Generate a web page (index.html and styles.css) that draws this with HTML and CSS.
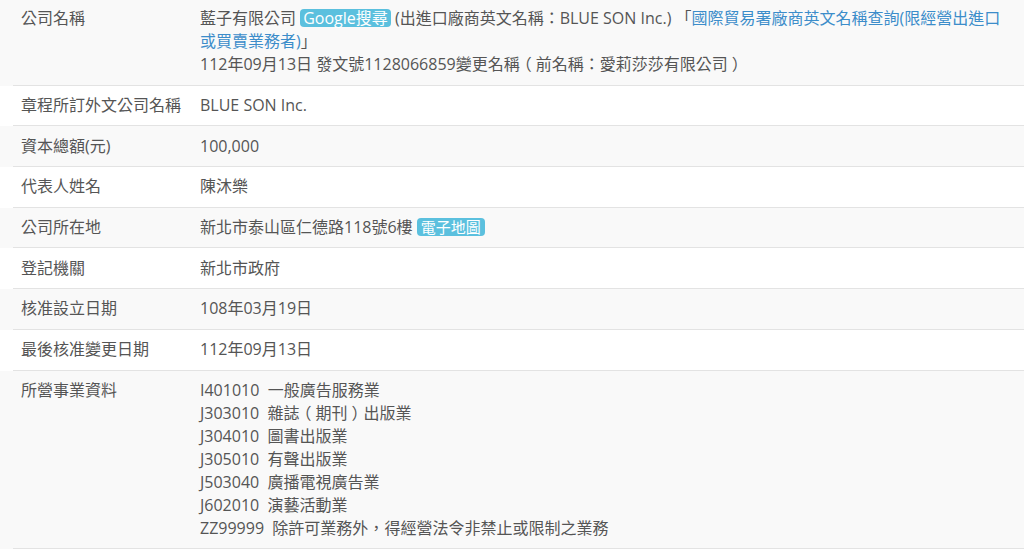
FILE: index.html
```html
<!DOCTYPE html>
<html lang="zh-TW">
<head>
<meta charset="utf-8">
<title>公司基本資料</title>
<link rel="stylesheet" href="styles.css">
</head>
<body>
<div class="info">
  <div class="row">
    <div class="cells">
      <div class="label">公司名稱</div>
      <div class="value">藍子有限公司 <span class="badge badge-g">Google搜尋</span> (出進口廠商英文名稱：BLUE SON Inc.) 「<a href="#">國際貿易署廠商英文名稱查詢(限經營出進口或買賣業務者)</a>」<br>112年09月13日 發文號1128066859變更名稱<span class="fw">（</span>前名稱：愛莉莎莎有限公司<span class="fw">）</span></div>
    </div>
  </div>
  <div class="row">
    <div class="cells">
      <div class="label">章程所訂外文公司名稱</div>
      <div class="value">BLUE SON Inc.</div>
    </div>
  </div>
  <div class="row">
    <div class="cells">
      <div class="label">資本總額(元)</div>
      <div class="value">100,000</div>
    </div>
  </div>
  <div class="row">
    <div class="cells">
      <div class="label">代表人姓名</div>
      <div class="value">陳沐樂</div>
    </div>
  </div>
  <div class="row">
    <div class="cells">
      <div class="label">公司所在地</div>
      <div class="value">新北市泰山區仁德路118號6樓 <span class="badge">電子地圖</span></div>
    </div>
  </div>
  <div class="row">
    <div class="cells">
      <div class="label">登記機關</div>
      <div class="value">新北市政府</div>
    </div>
  </div>
  <div class="row">
    <div class="cells">
      <div class="label">核准設立日期</div>
      <div class="value">108年03月19日</div>
    </div>
  </div>
  <div class="row">
    <div class="cells">
      <div class="label">最後核准變更日期</div>
      <div class="value">112年09月13日</div>
    </div>
  </div>
  <div class="row">
    <div class="cells">
      <div class="label">所營事業資料</div>
      <div class="value">I401010&nbsp; 一般廣告服務業<br>J303010&nbsp; 雜誌<span class="fw">（</span>期刊<span class="fw">）</span>出版業<br>J304010&nbsp; 圖書出版業<br>J305010&nbsp; 有聲出版業<br>J503040&nbsp; 廣播電視廣告業<br>J602010&nbsp; 演藝活動業<br>ZZ99999&nbsp; 除許可業務外<span class="fw">，</span>得經營法令非禁止或限制之業務</div>
    </div>
  </div>
</div>
</body>
</html>
```
FILE: styles.css
```css
html, body {
  margin: 0;
  padding: 0;
  background: #ffffff;
}
body {
  font-family: "Open Sans", "Noto Sans CJK TC", sans-serif;
  font-size: 16px;
  color: #555555;
}
.info {
  margin-top: -1px;
}
.row:nth-child(odd) {
  background: #f9f9f9;
}
.cells {
  margin-left: 13px;
  display: grid;
  grid-template-columns: 179px 1fr;
  border-bottom: 1px solid #e3e3e3;
}
.label,
.value {
  line-height: 23px;
  padding: 8.35px 8px;
}
.label {
  white-space: nowrap;
}
.value {
  padding-right: 14px;
}
.value a {
  color: #3c8dca;
  text-decoration: none;
}
.fw {
  display: inline-block;
  width: 1em;
  text-align: center;
  font-feature-settings: "halt" 1;
}
.badge {
  display: inline-block;
  background: #5bc0de;
  color: #ffffff;
  font-size: 15px;
  line-height: 18px;
  padding: 0 4px;
  border-radius: 4px;
}
.badge-g {
  font-size: 16px;
  padding: 0 3px;
}
```
